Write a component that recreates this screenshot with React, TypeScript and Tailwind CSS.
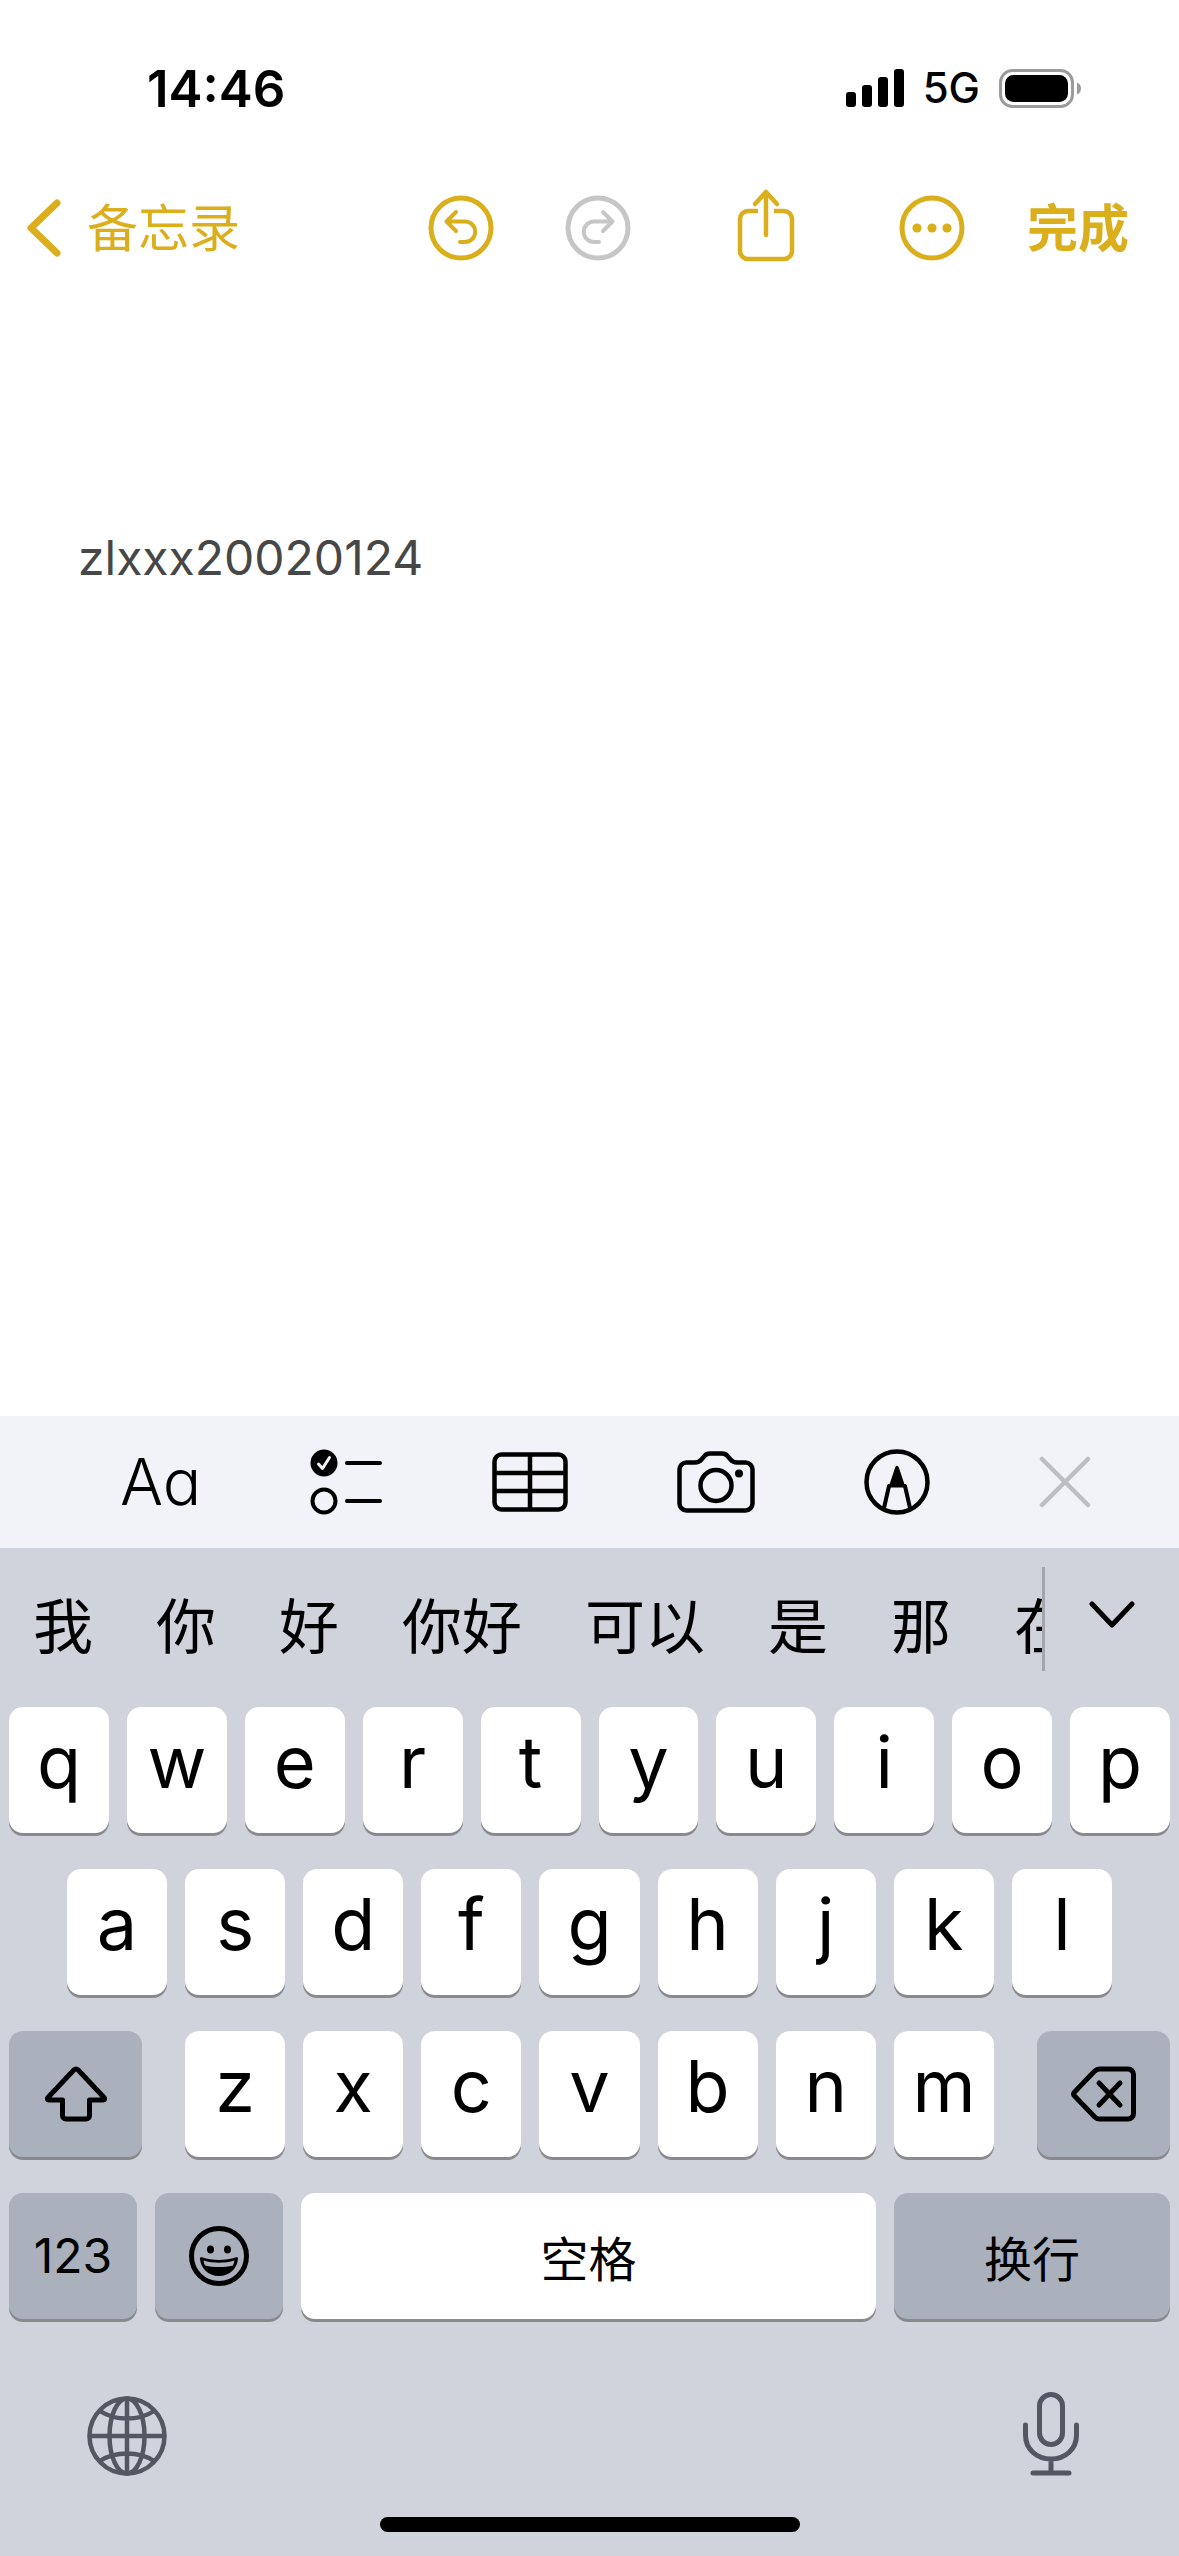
import { useState } from 'react'
import type { ReactNode } from 'react'

// ─── Data ─────────────────────────────────────────────────────────────────────

const CANDIDATES = ['我', '你', '好', '你好', '可以', '是', '那', '在']
const ROW_1 = ['q', 'w', 'e', 'r', 't', 'y', 'u', 'i', 'o', 'p']
const ROW_2 = ['a', 's', 'd', 'f', 'g', 'h', 'j', 'k', 'l']
const ROW_3 = ['z', 'x', 'c', 'v', 'b', 'n', 'm']

// ─── Icons ────────────────────────────────────────────────────────────────────

function Icon({ width, height, stroke = 5, children }: {
  width: number
  height: number
  stroke?: number
  children: ReactNode
}) {
  return (
    <svg
      width={width}
      height={height}
      viewBox={`0 0 ${width} ${height}`}
      className="block shrink-0"
      fill="none"
      stroke="currentColor"
      strokeWidth={stroke}
      strokeLinecap="round"
      strokeLinejoin="round"
      aria-hidden="true"
    >
      {children}
    </svg>
  )
}

function SignalIcon() {
  return (
    <Icon width={58} height={38} stroke={0}>
      <g fill="currentColor">
        <rect x="0" y="23" width="10" height="15" rx="3" />
        <rect x="16" y="16" width="10" height="22" rx="3" />
        <rect x="32" y="8" width="10" height="30" rx="3" />
        <rect x="48" y="0" width="10" height="38" rx="3" />
      </g>
    </Icon>
  )
}

function BatteryIcon() {
  return (
    <Icon width={82} height={39} stroke={3}>
      <rect x="1.5" y="1.5" width="72" height="36" rx="12" stroke="#9b9b9b" />
      <rect x="6" y="6" width="63" height="27" rx="8.5" fill="currentColor" stroke="none" />
      <path d="M78 13.5c2.5 1 4 3.2 4 6s-1.500 5-4 6z" fill="#9b9b9b" stroke="none" />
    </Icon>
  )
}

function BackIcon() {
  return (
    <Icon width={34} height={58} stroke={7}>
      <path d="M30 4 4 29l26 25" />
    </Icon>
  )
}

function UndoIcon() {
  return (
    <Icon width={66} height={66}>
      <circle cx="33" cy="33" r="30" />
      <path d="M28 17 18.500 26.500l9.500 9.500M19 26.500h18a10 10 0 0 1 0 20.500h-5" strokeWidth="4" />
    </Icon>
  )
}

function RedoIcon() {
  return (
    <Icon width={66} height={66}>
      <circle cx="33" cy="33" r="30" />
      <path d="m38 17 9.500 9.500L38 36M47 26.500H29a10 10 0 0 0 0 20.500h5" strokeWidth="4" />
    </Icon>
  )
}

function ShareIcon() {
  return (
    <Icon width={58} height={78} stroke={4.5}>
      <path d="M21 22H11a8 8 0 0 0-8 8v32a8 8 0 0 0 8 8h36a8 8 0 0 0 8-8V30a8 8 0 0 0-8-8H37" strokeLinecap="butt" />
      <path d="M29 3v43M18 15 29 3l11 12" />
    </Icon>
  )
}

function MoreIcon() {
  return (
    <Icon width={66} height={66}>
      <circle cx="33" cy="33" r="30" />
      <g fill="currentColor" stroke="none">
        <circle cx="18" cy="33" r="4.6" />
        <circle cx="33" cy="33" r="4.6" />
        <circle cx="48" cy="33" r="4.6" />
      </g>
    </Icon>
  )
}

function ChecklistIcon() {
  return (
    <Icon width={72} height={66} stroke={4}>
      <circle cx="14" cy="14" r="13.5" fill="currentColor" stroke="none" />
      <path d="m8.500 15 4 4.500 7-11" stroke="#f2f2f9" strokeWidth="3" />
      <circle cx="14" cy="52" r="11.5" />
      <path d="M37 14h33M37 52h33" />
    </Icon>
  )
}

function TableIcon() {
  return (
    <Icon width={76} height={60} stroke={4.5}>
      <rect x="2.5" y="2.5" width="71" height="55" rx="7" />
      <path d="M38 3v54M3 21h70M3 39h70" />
    </Icon>
  )
}

function CameraIcon() {
  return (
    <Icon width={78} height={62} stroke={4.5}>
      <path d="M9.500 11.500H18c3 0 4.600-.8 6.500-3l3-3.500c1.500-1.800 3-2.500 5.500-2.500h12c2.500 0 4 .7 5.500 2.500l3 3.500c1.900 2.200 3.500 3 6.500 3h8.500a7 7 0 0 1 7 7v34a7 7 0 0 1-7 7h-59a7 7 0 0 1-7-7v-34a7 7 0 0 1 7-7z" />
      <circle cx="39" cy="34.5" r="15.5" />
      <circle cx="62" cy="22.5" r="4" fill="currentColor" stroke="none" />
    </Icon>
  )
}

function MarkupIcon() {
  return (
    <Icon width={66} height={66} stroke={4.5}>
      <circle cx="33" cy="33" r="30.5" />
      <path d="m20 59 5-22M46 59l-5-22" strokeWidth="4" />
      <path d="M24.500 38.500 31 19c1-3 3-3 4 0l6.500 19.500z" fill="currentColor" stroke="none" />
    </Icon>
  )
}

function CloseIcon() {
  return (
    <Icon width={52} height={52} stroke={4.5}>
      <path d="m3 3 46 46M49 3 3 49" />
    </Icon>
  )
}

function ChevronDownIcon() {
  return (
    <Icon width={46} height={28} stroke={5}>
      <path d="m3 3 20 21L43 3" />
    </Icon>
  )
}

function ShiftIcon() {
  return (
    <Icon width={64} height={56} stroke={5}>
      <path d="M29.800 4 4 31.500c-1.200 1.400-.6 2.500 1 2.500h13.500v15.500c0 2 1.500 3.500 3.500 3.500h20c2 0 3.500-1.500 3.500-3.500V34H59c1.600 0 2.200-1.100 1-2.500L34.200 4c-1.500-1.500-2.900-1.500-4.400 0z" />
    </Icon>
  )
}

function BackspaceIcon() {
  return (
    <Icon width={66} height={56} stroke={5}>
      <path d="M28.500 3H57a5.500 5.500 0 0 1 5.500 5.500v39A5.500 5.500 0 0 1 57 53H28.500c-2 0-3.500-.8-5-2.300L3.800 30.300c-1.500-1.500-1.500-3.100 0-4.600L23.500 5.300c1.500-1.500 3-2.300 5-2.300z" />
      <path d="m28 17 21 22M49 17 28 39" />
    </Icon>
  )
}

function EmojiIcon() {
  return (
    <Icon width={60} height={60} stroke={5}>
      <circle cx="30" cy="30" r="27.5" />
      <ellipse cx="21.5" cy="23.5" rx="3.5" ry="4" fill="currentColor" stroke="none" />
      <ellipse cx="38.5" cy="23.5" rx="3.5" ry="4" fill="currentColor" stroke="none" />
      <path d="M11 32.500c0-1 .8-1.600 2-1.200 10.500 3.500 23.500 3.500 34 0 1.200-.4 2 .2 2 1.200C48.500 42 41 50 30 50S11.500 42 11 32.500z" fill="currentColor" stroke="none" />
      <path d="M14.500 34.500c9.500 3 21.500 3 31 0-.3 2-.8 3.600-1.600 5-8.500 2-19.300 2-27.800 0-.8-1.400-1.300-3-1.600-5z" fill="#abb0bd" stroke="none" />
    </Icon>
  )
}

function GlobeIcon() {
  return (
    <Icon width={80} height={80} stroke={4.5}>
      <circle cx="40" cy="40" r="37.5" />
      <ellipse cx="40" cy="40" rx="17.5" ry="37.5" />
      <path d="M40 3v74M3 40h74M13 15c15 10 39 10 54 0M13 65c15-10 39-10 54 0" />
    </Icon>
  )
}

function MicIcon() {
  return (
    <Icon width={56} height={84} stroke={5}>
      <rect x="16.5" y="2.5" width="23" height="50" rx="11.5" />
      <path d="M2.500 33v10c0 14 11 24 25.500 24s25.500-10 25.500-24V33M28 67v14M10 81h36" />
    </Icon>
  )
}

// ─── Keys ─────────────────────────────────────────────────────────────────────

const KEY_BASE = 'flex h-[126px] items-center justify-center rounded-[14px] text-black shadow-[0_3px_0_#898a8d]'

function LetterKey({ label, onPress }: { label: string; onPress: (s: string) => void }) {
  return (
    <button
      type="button"
      onClick={() => onPress(label)}
      className={`${KEY_BASE} min-w-0 flex-1 bg-white pb-4 text-[72px] leading-none`}
    >
      {label}
    </button>
  )
}

// ─── Page ─────────────────────────────────────────────────────────────────────

export default function NoteEditor() {
  const [note, setNote] = useState('zlxxx20020124')

  const type = (s: string) => setNote((n) => n + s)

  return (
    <div className="flex min-h-screen w-full flex-col overflow-hidden bg-white font-['Inter','Noto_Sans_CJK_SC',sans-serif] text-black">
      {/* Status bar */}
      <div className="flex h-[176px] shrink-0 items-center justify-between pl-[147px] pr-[98px]">
        <span className="text-[51px] font-semibold leading-none">14:46</span>
        <div className="flex items-center gap-[19px]">
          <SignalIcon />
          <span className="text-[42px] font-medium leading-none">5G</span>
          <BatteryIcon />
        </div>
      </div>

      {/* Navigation */}
      <header className="flex h-[104px] shrink-0 items-center pl-[27px] pr-[50px] text-[#dbae1c]">
        <a href="#notes" className="flex items-center gap-[26px] text-[51px] leading-none">
          <BackIcon />
          备忘录
        </a>
        <div className="ml-auto flex items-center">
          <div className="mr-[106px] flex gap-[71px]">
            <button type="button" aria-label="撤销"><UndoIcon /></button>
            <button type="button" aria-label="重做" disabled className="text-[#c6c6c6]"><RedoIcon /></button>
          </div>
          <button type="button" aria-label="共享" className="mr-[104px]"><ShareIcon /></button>
          <button type="button" aria-label="更多" className="mr-[62px]"><MoreIcon /></button>
          <button type="button" className="text-[51px] font-bold leading-none">完成</button>
        </div>
      </header>

      {/* Note body */}
      <main className="flex flex-1 flex-col px-[78px] pt-[248px]">
        <textarea
          aria-label="备忘录正文"
          value={note}
          onChange={(e) => setNote(e.target.value)}
          spellCheck={false}
          className="w-full flex-1 resize-none bg-transparent text-[48px] leading-[60px] text-[#474747] outline-none"
        />
      </main>

      {/* Format toolbar */}
      <div className="flex h-[132px] shrink-0 items-center justify-between bg-[#f2f2f9] pl-[120px] pr-[88px]">
        <button type="button" aria-label="格式" className="text-[64px] font-light leading-none [font-feature-settings:'cv11']">Aa</button>
        <button type="button" aria-label="核对清单"><ChecklistIcon /></button>
        <button type="button" aria-label="表格"><TableIcon /></button>
        <button type="button" aria-label="相机"><CameraIcon /></button>
        <button type="button" aria-label="标记"><MarkupIcon /></button>
        <button type="button" aria-label="关闭" className="text-[#bdbdc2]"><CloseIcon /></button>
      </div>

      {/* Keyboard */}
      <div className="shrink-0 bg-[#d0d3dc] pb-6 pt-[19px]">
        <div className="flex h-[104px] items-stretch">
          <div className="flex min-w-0 flex-1 items-center gap-[63px] overflow-hidden border-r-[3px] border-[#a3a6ad] pl-[33px] pt-4">
            {CANDIDATES.map((word) => (
              <button
                key={word}
                type="button"
                onClick={() => type(word)}
                className="shrink-0 whitespace-nowrap text-[60px] leading-none"
              >
                {word}
              </button>
            ))}
          </div>
          <button type="button" aria-label="展开候选" className="flex w-[134px] shrink-0 items-center justify-center pb-2">
            <ChevronDownIcon />
          </button>
        </div>

        <div className="mt-9 flex flex-col gap-9">
          <div className="flex gap-[18px] px-[9px]">
            {ROW_1.map((k) => <LetterKey key={k} label={k} onPress={type} />)}
          </div>
          <div className="flex gap-[18px] px-[67px]">
            {ROW_2.map((k) => <LetterKey key={k} label={k} onPress={type} />)}
          </div>
          <div className="flex gap-[43px] px-[9px]">
            <button type="button" aria-label="切换大写" className={`${KEY_BASE} w-[133px] shrink-0 bg-[#abb0bd]`}>
              <ShiftIcon />
            </button>
            <div className="flex flex-1 gap-[18px]">
              {ROW_3.map((k) => <LetterKey key={k} label={k} onPress={type} />)}
            </div>
            <button
              type="button"
              aria-label="删除"
              onClick={() => setNote((n) => n.slice(0, -1))}
              className={`${KEY_BASE} w-[133px] shrink-0 bg-[#abb0bd]`}
            >
              <BackspaceIcon />
            </button>
          </div>
          <div className="flex gap-[18px] px-[9px] text-[48px] leading-none">
            <button type="button" className={`${KEY_BASE} w-[128px] shrink-0 bg-[#abb0bd]`}>123</button>
            <button type="button" aria-label="表情" className={`${KEY_BASE} w-[128px] shrink-0 bg-[#abb0bd]`}>
              <EmojiIcon />
            </button>
            <button type="button" onClick={() => type(' ')} className={`${KEY_BASE} flex-1 bg-white pt-2`}>空格</button>
            <button type="button" onClick={() => type('\n')} className={`${KEY_BASE} w-[276px] shrink-0 bg-[#abb0bd] pt-2`}>换行</button>
          </div>
        </div>

        <div className="mt-[73px] flex items-end justify-between pl-[87px] pr-[100px] text-[#535762]">
          <button type="button" aria-label="切换键盘"><GlobeIcon /></button>
          <button type="button" aria-label="听写"><MicIcon /></button>
        </div>

        {/* Home indicator */}
        <div className="mx-auto mt-[41px] h-[15px] w-[420px] rounded-full bg-black" />
      </div>
    </div>
  )
}
